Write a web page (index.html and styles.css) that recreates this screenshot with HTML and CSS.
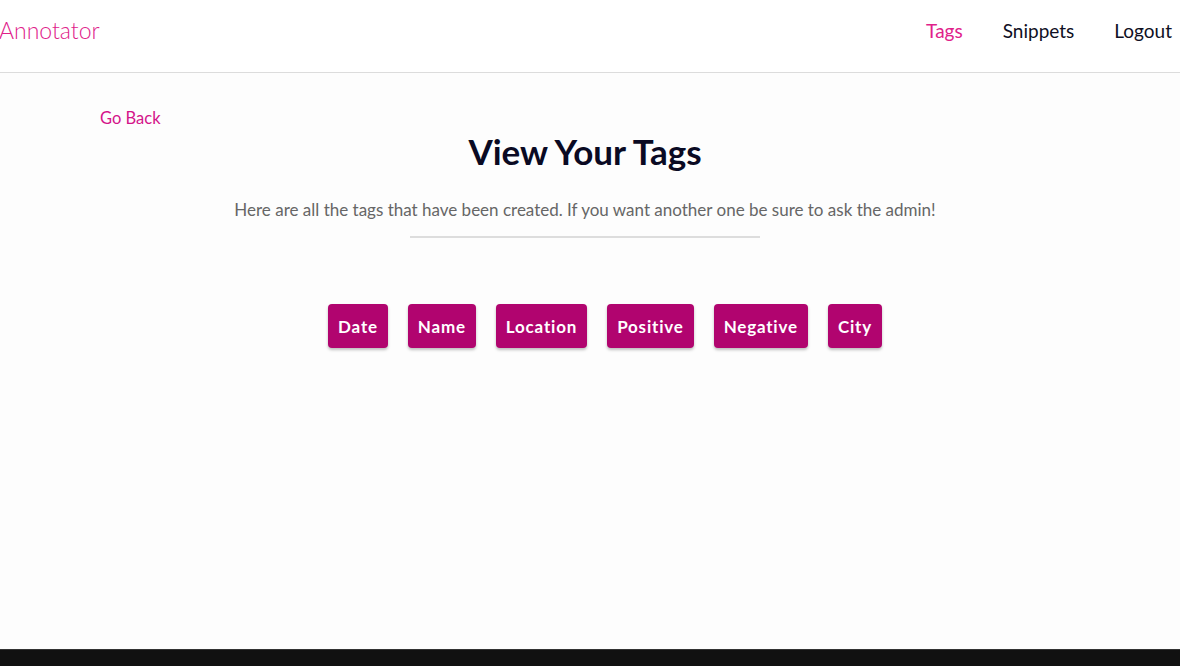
FILE: index.html
```html
<!DOCTYPE html>
<html>
<head>
<meta charset="utf-8">
<link rel="stylesheet" href="styles.css">
</head>
<body>
<header class="navbar">
  <a class="brand">Annotator</a>
  <nav class="nav-links">
    <a class="nav-link active">Tags</a>
    <a class="nav-link">Snippets</a>
    <a class="nav-link">Logout</a>
  </nav>
</header>
<main class="page">
  <a class="go-back">Go Back</a>
  <h1 class="title">View Your Tags</h1>
  <p class="subtitle">Here are all the tags that have been created. If you want another one be sure to ask the admin!</p>
  <hr class="divider">
  <div class="tags">
    <span class="tag">Date</span>
    <span class="tag">Name</span>
    <span class="tag">Location</span>
    <span class="tag">Positive</span>
    <span class="tag">Negative</span>
    <span class="tag">City</span>
  </div>
</main>
<footer class="footer"></footer>
</body>
</html>
```
FILE: styles.css
```css
* { box-sizing: border-box; }
html, body { margin: 0; padding: 0; }
body {
  font-family: Lato, "Open Sans", sans-serif;
  background: #fdfdfd;
  height: 666px;
  display: flex;
  flex-direction: column;
  overflow: hidden;
}
a { text-decoration: none; cursor: pointer; }
.navbar {
  height: 73px;
  background: #ffffff;
  border-bottom: 1px solid #dcdcdc;
  display: flex;
  align-items: center;
  justify-content: space-between;
  padding: 0 8px 12px 0;
  flex-shrink: 0;
}
.brand {
  font-size: 23px;
  font-weight: 300;
  color: #e0218a;
  margin-left: -1px;
}
.nav-links { display: flex; gap: 40px; }
.nav-link {
  font-size: 19px;
  color: #0f0f23;
}
.nav-link.active { color: #e0218a; }
.page {
  flex: 1;
  display: flex;
  flex-direction: column;
  padding: 34px 110px 0 100px;
}
.go-back {
  align-self: flex-start;
  color: #d4148a;
  font-size: 16.5px;
  line-height: 22px;
}
.title {
  text-align: center;
  font-size: 35px;
  font-weight: 700;
  color: #0a0a23;
  margin: 0;
  line-height: 44px;
}
.subtitle {
  text-align: center;
  font-size: 17px;
  color: #666;
  margin: 26px 0 0;
  line-height: 22px;
}
.divider {
  width: 350px;
  border: 0;
  border-top: 2px solid #dddddd;
  margin: 15px auto 0;
}
.tags {
  display: flex;
  justify-content: center;
  gap: 20px;
  margin-top: 66px;
  padding-left: 40px;
}
.tag {
  background: #b1046f;
  color: #fff;
  font-weight: 700;
  font-size: 17px;
  letter-spacing: 0.8px;
  height: 44px;
  display: flex;
  align-items: center;
  padding: 0 10px;
  border-radius: 4px;
  box-shadow: 0 2px 3px rgba(0,0,0,0.25);
}
.footer {
  height: 17px;
  background: #111111;
  border-top: 1px solid #333;
  flex-shrink: 0;
}
```
